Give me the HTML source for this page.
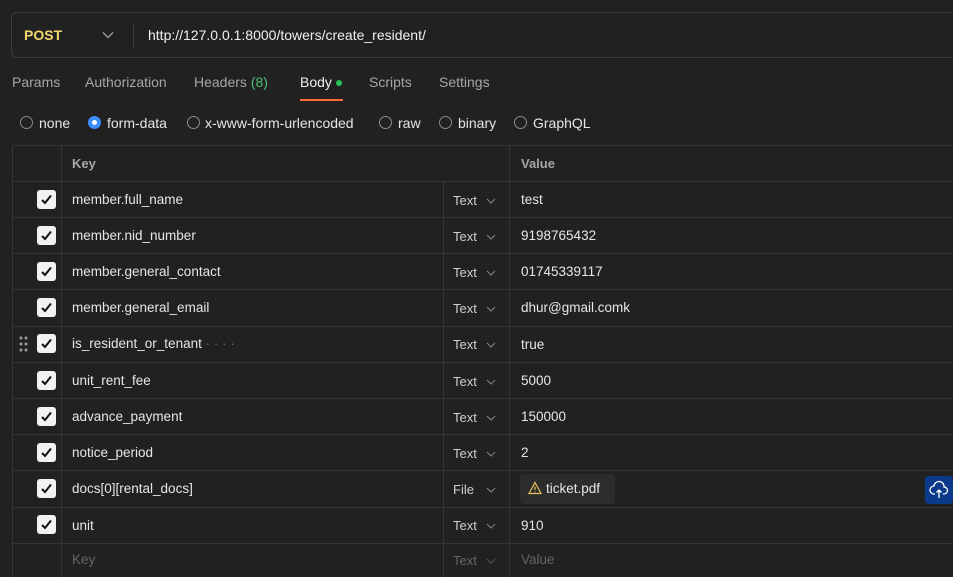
<!DOCTYPE html>
<html><head><style>
*{box-sizing:border-box;margin:0;padding:0}
html{width:953px;height:577px;overflow:hidden;background:#212121}
body{width:953px;height:577px;background:#212121;font-family:"Liberation Sans",sans-serif;color:#e6e6e6;position:relative;overflow:hidden;font-size:13px}
.abs{position:absolute}
.url{left:11px;top:12px;width:960px;height:46px;border:1px solid #3d3d3d;border-radius:6px}
.tab{top:74px;font-size:14px;color:#a6a6a6}
.radio{top:116px;width:13px;height:13px;border:1px solid #8a8a8a;border-radius:50%}
.rl{top:115px;font-size:14px;color:#e6e6e6}
.tbl{left:12px;top:145px;width:960px;height:432px;border-left:1px solid #353535;border-top:1px solid #353535}
.h{left:12px;width:950px;height:1px;background:#353535}
.v{top:146px;width:1px;height:431px;background:#353535}
.cb{left:37px;width:19px;height:19px;background:#f2f2f2;border-radius:3px}
.cb svg{position:absolute;left:3px;top:3px}
.k{left:72px;font-size:13.5px;color:#e6e6e6}
.t{left:453px;font-size:13px;color:#d0d0d0}
.c{left:486px;width:10px;height:6px}
.val{left:521px;font-size:13.5px;color:#e6e6e6}
</style></head><body>
<div class="abs url"></div>
<div class="abs" style="left:24px;top:27px;font-weight:bold;color:#f5d76e;font-size:14px">POST</div>
<svg class="abs" style="left:102px;top:31px" width="12" height="8"><path d="M1 1.5L6 6.5L11 1.5" stroke="#a0a0a0" stroke-width="1.3" fill="none"/></svg>
<div class="abs" style="left:133px;top:24px;width:1px;height:24px;background:#3d3d3d"></div>
<div class="abs" style="left:148px;top:27px;font-size:14px;color:#f0f0f0">http://127.0.0.1:8000/towers/create_resident/</div>

<div class="abs tab" style="left:12px">Params</div>
<div class="abs tab" style="left:85px">Authorization</div>
<div class="abs tab" style="left:194px">Headers <span style="color:#4cc073">(8)</span></div>
<div class="abs tab" style="left:300px;color:#f0f0f0">Body</div>
<div class="abs" style="left:336px;top:80px;width:6px;height:6px;border-radius:50%;background:#2bc25a"></div>
<div class="abs" style="left:300px;top:99px;width:43px;height:2px;background:#ff6c37"></div>
<div class="abs tab" style="left:369px">Scripts</div>
<div class="abs tab" style="left:439px">Settings</div>

<div class="abs radio" style="left:20px"></div><div class="abs rl" style="left:39px">none</div>
<div class="abs radio" style="left:88px;border:4px solid #3d8bfd;background:#fff"></div><div class="abs rl" style="left:107px">form-data</div>
<div class="abs radio" style="left:187px"></div><div class="abs rl" style="left:205px">x-www-form-urlencoded</div>
<div class="abs radio" style="left:379px"></div><div class="abs rl" style="left:398px">raw</div>
<div class="abs radio" style="left:439px"></div><div class="abs rl" style="left:458px">binary</div>
<div class="abs radio" style="left:514px"></div><div class="abs rl" style="left:533px">GraphQL</div>

<div class="abs tbl"></div>
<div class="abs v" style="left:61px"></div>
<div class="abs v" style="left:443px;top:181px;height:396px"></div>
<div class="abs v" style="left:509px"></div>
<div class="abs" style="left:72px;top:156px;color:#a6a6a6;font-size:13px;font-weight:bold">Key</div>
<div class="abs" style="left:521px;top:156px;color:#a6a6a6;font-size:13px;font-weight:bold">Value</div>

<div class="abs h" style="top:181px"></div>
<div class="abs h" style="top:217px"></div>
<div class="abs h" style="top:253px"></div>
<div class="abs h" style="top:289px"></div>
<div class="abs h" style="top:326px"></div>
<div class="abs h" style="top:362px"></div>
<div class="abs h" style="top:398px"></div>
<div class="abs h" style="top:434px"></div>
<div class="abs h" style="top:470px"></div>
<div class="abs h" style="top:507px"></div>
<div class="abs h" style="top:543px"></div>

<div class="abs cb" style="top:190px"><svg width="13" height="13"><path d="M2 7L5 10L11 2.5" stroke="#111" stroke-width="2" fill="none"/></svg></div>
<div class="abs k" style="top:192px">member.full_name</div><div class="abs t" style="top:193px">Text</div><svg class="abs c" style="top:198px"><path d="M1 1L5 5L9 1" stroke="#888" fill="none"/></svg><div class="abs val" style="top:192px">test</div>

<div class="abs cb" style="top:226px"><svg width="13" height="13"><path d="M2 7L5 10L11 2.5" stroke="#111" stroke-width="2" fill="none"/></svg></div>
<div class="abs k" style="top:228px">member.nid_number</div><div class="abs t" style="top:229px">Text</div><svg class="abs c" style="top:234px"><path d="M1 1L5 5L9 1" stroke="#888" fill="none"/></svg><div class="abs val" style="top:228px">9198765432</div>

<div class="abs cb" style="top:262px"><svg width="13" height="13"><path d="M2 7L5 10L11 2.5" stroke="#111" stroke-width="2" fill="none"/></svg></div>
<div class="abs k" style="top:264px">member.general_contact</div><div class="abs t" style="top:265px">Text</div><svg class="abs c" style="top:270px"><path d="M1 1L5 5L9 1" stroke="#888" fill="none"/></svg><div class="abs val" style="top:264px">01745339117</div>

<div class="abs cb" style="top:298px"><svg width="13" height="13"><path d="M2 7L5 10L11 2.5" stroke="#111" stroke-width="2" fill="none"/></svg></div>
<div class="abs k" style="top:300px">member.general_email</div><div class="abs t" style="top:301px">Text</div><svg class="abs c" style="top:306px"><path d="M1 1L5 5L9 1" stroke="#888" fill="none"/></svg><div class="abs val" style="top:300px">dhur@gmail.comk</div>

<svg class="abs" style="left:19px;top:336px" width="9" height="16"><g fill="#9a9a9a"><circle cx="2" cy="2" r="1.5"/><circle cx="7" cy="2" r="1.5"/><circle cx="2" cy="8" r="1.5"/><circle cx="7" cy="8" r="1.5"/><circle cx="2" cy="14" r="1.5"/><circle cx="7" cy="14" r="1.5"/></g></svg>
<div class="abs cb" style="top:334px"><svg width="13" height="13"><path d="M2 7L5 10L11 2.5" stroke="#111" stroke-width="2" fill="none"/></svg></div>
<div class="abs k" style="top:336px">is_resident_or_tenant<span style="color:#666"> · · · ·</span></div><div class="abs t" style="top:337px">Text</div><svg class="abs c" style="top:342px"><path d="M1 1L5 5L9 1" stroke="#888" fill="none"/></svg><div class="abs val" style="top:337px">true</div>

<div class="abs cb" style="top:371px"><svg width="13" height="13"><path d="M2 7L5 10L11 2.5" stroke="#111" stroke-width="2" fill="none"/></svg></div>
<div class="abs k" style="top:373px">unit_rent_fee</div><div class="abs t" style="top:374px">Text</div><svg class="abs c" style="top:379px"><path d="M1 1L5 5L9 1" stroke="#888" fill="none"/></svg><div class="abs val" style="top:373px">5000</div>

<div class="abs cb" style="top:407px"><svg width="13" height="13"><path d="M2 7L5 10L11 2.5" stroke="#111" stroke-width="2" fill="none"/></svg></div>
<div class="abs k" style="top:409px">advance_payment</div><div class="abs t" style="top:410px">Text</div><svg class="abs c" style="top:415px"><path d="M1 1L5 5L9 1" stroke="#888" fill="none"/></svg><div class="abs val" style="top:409px">150000</div>

<div class="abs cb" style="top:443px"><svg width="13" height="13"><path d="M2 7L5 10L11 2.5" stroke="#111" stroke-width="2" fill="none"/></svg></div>
<div class="abs k" style="top:445px">notice_period</div><div class="abs t" style="top:446px">Text</div><svg class="abs c" style="top:451px"><path d="M1 1L5 5L9 1" stroke="#888" fill="none"/></svg><div class="abs val" style="top:445px">2</div>

<div class="abs cb" style="top:479px"><svg width="13" height="13"><path d="M2 7L5 10L11 2.5" stroke="#111" stroke-width="2" fill="none"/></svg></div>
<div class="abs k" style="top:481px">docs[0][rental_docs]</div><div class="abs t" style="top:482px">File</div><svg class="abs c" style="top:487px"><path d="M1 1L5 5L9 1" stroke="#888" fill="none"/></svg>
<div class="abs" style="left:520px;top:474px;width:95px;height:30px;background:#2c2c2c;border-radius:4px"></div>
<svg class="abs" style="left:528px;top:481px" width="14" height="14"><path d="M7 1.5L13 12.5H1Z" stroke="#e8c060" stroke-width="1.2" fill="none"/><path d="M7 5.5V9M7 10.5V11.3" stroke="#e8c060" stroke-width="1.2"/></svg>
<div class="abs val" style="left:546px;top:481px">ticket.pdf</div>
<div class="abs" style="left:925px;top:476px;width:28px;height:28px;background:#0b3a8a;border-radius:4px"></div>
<svg class="abs" style="left:929px;top:480px" width="20" height="20"><path d="M6 14H5a4 4 0 0 1 0-8 5 5 0 0 1 10 1 3 3 0 0 1 0 7h-1M10 10v8M7.5 12.5L10 10l2.5 2.5" stroke="#fff" stroke-width="1.3" fill="none"/></svg>

<div class="abs cb" style="top:515px"><svg width="13" height="13"><path d="M2 7L5 10L11 2.5" stroke="#111" stroke-width="2" fill="none"/></svg></div>
<div class="abs k" style="top:518px">unit</div><div class="abs t" style="top:518px">Text</div><svg class="abs c" style="top:523px"><path d="M1 1L5 5L9 1" stroke="#888" fill="none"/></svg><div class="abs val" style="top:518px">910</div>

<div class="abs k" style="top:552px;color:#666">Key</div><div class="abs t" style="top:553px;color:#666">Text</div><svg class="abs c" style="top:558px"><path d="M1 1L5 5L9 1" stroke="#555" fill="none"/></svg><div class="abs val" style="top:552px;color:#666">Value</div>
</body></html>
